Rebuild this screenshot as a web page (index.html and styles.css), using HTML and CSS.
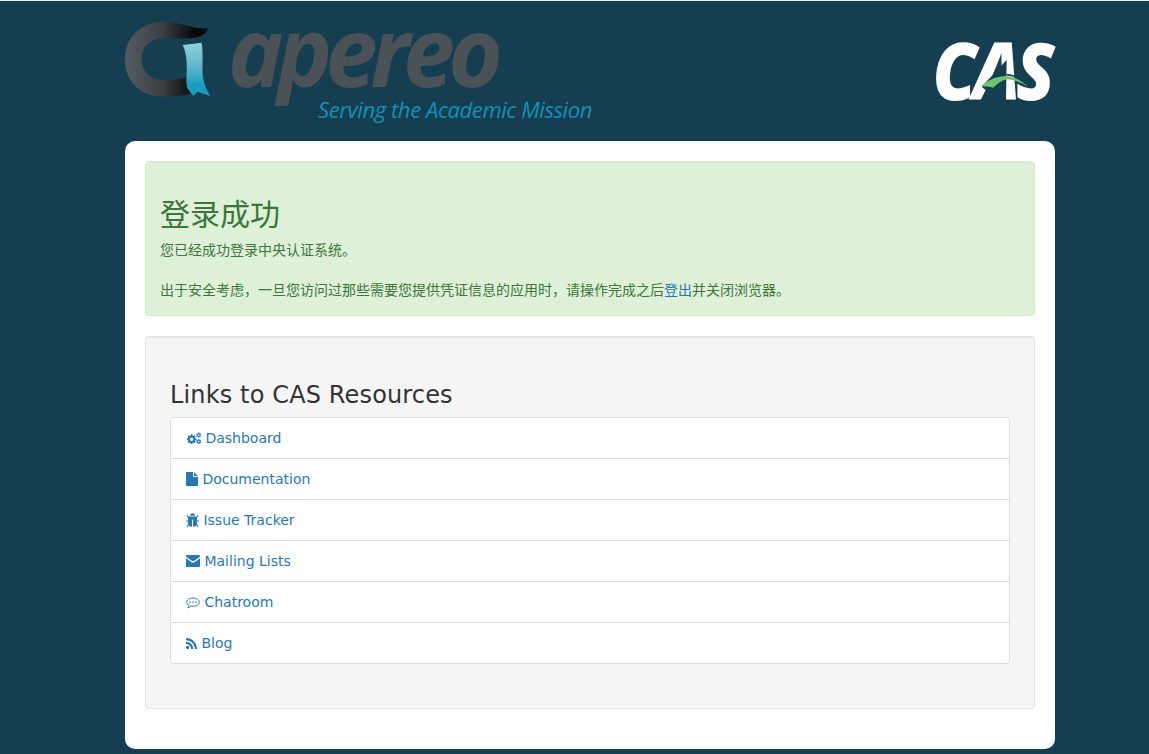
FILE: index.html
```html
<!DOCTYPE html>
<html lang="zh-CN">
<head>
<meta charset="utf-8">
<title>CAS - 登录成功</title>
<link rel="stylesheet" href="styles.css">
</head>
<body>
<div class="container">
  <header class="top">
    <svg class="logo-apereo" width="470" height="120" viewBox="0 0 470 120">
      <defs>
        <linearGradient id="ringgrad" x1="0" x2="1" y1="0" y2="0">
          <stop offset="0" stop-color="#555c61"/>
          <stop offset=".45" stop-color="#3a3f43"/>
          <stop offset=".85" stop-color="#050709"/>
          <stop offset="1" stop-color="#050709"/>
        </linearGradient>
        <linearGradient id="ribbongrad" x1="0" x2="0" y1="0" y2="1">
          <stop offset="0" stop-color="#8fd0da"/>
          <stop offset=".45" stop-color="#62b5cd"/>
          <stop offset=".8" stop-color="#199dc0"/>
          <stop offset="1" stop-color="#1a9cc0"/>
        </linearGradient>
        <clipPath id="wordclip"><rect x="90" y="0" width="300" height="85"/></clipPath>
      </defs>
      <g transform="translate(-15 -21) scale(.33333)">
        <path fill="url(#ringgrad)" d="M295 85C285 108 265 113 240 115C215 117 190 115 165 115C120 115 95 140 95 178C95 215 120 240 165 240C190 240 210 238 230 232L240 282C215 288 190 290 160 290C90 290 45 245 45 178C45 110 95 65 160 65C215 65 245 88 295 85Z"/>
        <path fill="url(#ribbongrad)" d="M218 135L275 128C281 165 275 200 279 232C283 255 290 272 301 288L262 275L250 288L232 265C226 240 232 215 230 190C229 170 226 150 218 135Z"/>
      </g>
      <text class="apereo-word" x="103" y="66" textLength="268" lengthAdjust="spacingAndGlyphs" clip-path="url(#wordclip)">apereo</text>
      <text class="apereo-tag" x="193" y="97" textLength="274" lengthAdjust="spacingAndGlyphs">Serving the Academic Mission</text>
    </svg>
    <svg class="logo-cas" width="118" height="62" viewBox="0 0 118 62">
      <text class="cas-word" x="-4.500" y="59" textLength="118" lengthAdjust="spacingAndGlyphs">CAS</text>
      <g transform="translate(28 -1) scale(.33333)">
        <path fill="#153e50" d="M125 60L123 182H46L62 150L50 140Z"/>
        <path fill="none" stroke="#153e50" stroke-width="5" d="M125 104C150 106 175 122 192 140"/>
        <path fill="#6cc56a" d="M48 140C65 120 100 108 125 108C150 110 175 125 190 142C170 128 150 120 125 118C110 122 95 132 85 143C75 140 60 138 48 140Z"/>
      </g>
    </svg>
  </header>

  <main class="card">
    <div class="alert-success">
      <h2 class="alert-title">登录成功</h2>
      <p class="alert-text">您已经成功登录中央认证系统。</p>
      <br>
      <p class="alert-text">出于安全考虑，一旦您访问过那些需要您提供凭证信息的应用时，请操作完成之后<a href="#">登出</a>并关闭浏览器。</p>
    </div>

    <div class="well">
      <h3 class="well-title">Links to CAS Resources</h3>
      <div class="list-group">
        <a class="list-item" href="#">
          <svg class="icon icon-cogs" viewBox="1 0 29 25"><path d="M10.500 4.500h3l.5 2.300 1.600.7 2-1.300 2.100 2.100-1.300 2 .7 1.600 2.300.5v3l-2.300.5-.7 1.600 1.300 2-2.100 2.100-2-1.300-1.600.7-.5 2.300h-3l-.5-2.300-1.600-.7-2 1.300-2.100-2.100 1.300-2-.7-1.600-2.300-.5v-3l2.300-.5.7-1.600-1.300-2 2.100-2.100 2 1.300 1.600-.7zM12 10.700a3.300 3.300 0 1 0 0 6.600 3.300 3.300 0 0 0 0-6.600z" fill-rule="evenodd"/><path d="M24.500 1h2l.3 1.300 1.300.7 1.200-.5.9 1.600-1 .9v1.500l1 .9-.9 1.600-1.200-.5-1.300.7-.3 1.300h-2l-.3-1.300-1.300-.7-1.200.5-.9-1.600 1-.9V5.500l-1-.9.9-1.600 1.200.5 1.300-.7zM25.500 4.500a1.500 1.500 0 1 0 0 3 1.500 1.500 0 0 0 0-3z" fill-rule="evenodd"/><path d="M24.500 13.500h2l.3 1.300 1.300.7 1.200-.5.9 1.600-1 .9v1.500l1 .9-.9 1.600-1.200-.5-1.300.7-.3 1.300h-2l-.3-1.300-1.300-.7-1.200.5-.9-1.600 1-.9V18l-1-.9.9-1.600 1.200.5 1.300-.7zM25.500 17a1.500 1.500 0 1 0 0 3 1.500 1.500 0 0 0 0-3z" fill-rule="evenodd"/></svg>
          Dashboard
        </a>
        <a class="list-item" href="#">
          <svg class="icon icon-file" viewBox="0 0 12 14"><path d="M0 .8C0 .4.3 0 .8 0H7v4.200c0 .5.300.8.800.8H12v8.200c0 .5-.3.800-.8.800H.8c-.5 0-.8-.3-.8-.8zM8 0l4 4H8z"/></svg>
          Documentation
        </a>
        <a class="list-item" href="#">
          <svg class="icon icon-bug" viewBox="0 0 13 14"><path d="M4 2.800C4 1.300 5.100.3 6.500.3S9 1.300 9 2.800z"/><path d="M3 3.600h7c.8.600 1 1.300 1 2.200v4.200C11 12.300 9.500 13.700 7 14V6.500H6V14c-2.500-.3-4-1.700-4-4V5.800c0-.9.200-1.600 1-2.200z"/><path d="M.9 2.500l2 2M12.100 2.500l-2 2M0 8h2.500M13 8h-2.500M.8 13.500l2-2M12.200 13.500l-2-2" stroke="currentColor" stroke-width="1.100" fill="none"/></svg>
          Issue Tracker
        </a>
        <a class="list-item" href="#">
          <svg class="icon icon-envelope" viewBox="0 0 14 12"><path d="M0 3.300V11c0 .6.400 1 1 1h12c.6 0 1-.4 1-1V3.300L8.300 7.300C7.500 7.900 6.500 7.900 5.700 7.300z"/><path d="M1 0C.4 0 0 .4 0 1c0 .5.300 1 .8 1.300l5 3.500c.7.500 1.700.5 2.400 0l5-3.500c.5-.3.800-.8.800-1.300 0-.6-.4-1-1-1z"/></svg>
          Mailing Lists
        </a>
        <a class="list-item" href="#">
          <svg class="icon icon-chat" viewBox="0 0 14 12"><path d="M7 1C3.600 1 .7 2.800.7 5.200c0 1.300.9 2.500 2.300 3.300-.1.900-.6 1.700-1.200 2.300 1.300-.2 2.500-.8 3.400-1.700.6.100 1.200.2 1.800.2 3.400 0 6.300-1.800 6.300-4.100S10.400 1 7 1z" fill="none" stroke="currentColor" stroke-width="1"/><circle cx="4" cy="5.200" r=".8"/><circle cx="7" cy="5.200" r=".8"/><circle cx="10" cy="5.200" r=".8"/></svg>
          Chatroom
        </a>
        <a class="list-item" href="#">
          <svg class="icon icon-rss" viewBox="0 0 11 11"><circle cx="1.600" cy="9.400" r="1.600"/><path d="M0 3.700v2.200c2.800 0 5.100 2.300 5.100 5.100h2.200C7.300 7 4 3.700 0 3.700z"/><path d="M0 0v2.200c4.900 0 8.800 3.900 8.800 8.800H11C11 4.900 6.100 0 0 0z"/></svg>
          Blog
        </a>
      </div>
    </div>
  </main>
</div>
</body>
</html>
```

FILE: styles.css
```css
html, body {
   margin: 0;
   padding: 0;
}

body {
   background-color: #153e50;
   border-top: 1px solid #e8eef0;
   font-family: "DejaVu Sans", "Noto Sans CJK SC", sans-serif;
   font-size: 14px;
   line-height: 20px;
   color: #333;
}

.container {
   width: 930px;
   margin: 0 0 5px 125px;
}

.top {
   display: flex;
   justify-content: space-between;
   align-items: flex-start;
   height: 120px;
   padding-top: 20px;
}

.logo-apereo {
   display: block;
   overflow: visible;
}

.logo-cas {
   display: block;
   margin-top: 20px;
   overflow: visible;
}

.apereo-word {
   font-family: "Open Sans", sans-serif;
   font-style: italic;
   font-weight: 700;
   font-size: 96px;
   letter-spacing: -7px;
   fill: #4b5257;
}

.apereo-tag {
   font-family: "Open Sans", sans-serif;
   font-style: italic;
   font-size: 21px;
   letter-spacing: -.4px;
   fill: #1490b8;
}

.cas-word {
   font-family: "Open Sans", sans-serif;
   font-style: italic;
   font-weight: 800;
   font-size: 80px;
   letter-spacing: -5px;
   fill: #fff;
}

.card {
   background-color: #fff;
   border-radius: 10px;
   padding: 20px;
}

.alert-success {
   background-color: #dff0d8;
   border: 1px solid #d6e9c6;
   border-radius: 4px;
   padding: 15px;
   margin-bottom: 20px;
   color: #3c763d;
}

.alert-title {
   font-size: 30px;
   font-weight: 400;
   line-height: 33px;
   margin: 21px 0 9px -1px;
}

.alert-text {
   margin: 0 0 0 -1px;
}

.alert-text a {
   color: #2a76b5;
   text-decoration: none;
}

.well {
   background-color: #f5f5f5;
   border: 1px solid #e3e3e3;
   border-radius: 4px;
   padding: 24px;
   margin-bottom: 20px;
   box-shadow: inset 0 1px 1px rgba(0, 0, 0, .05);
}

.well-title {
   font-size: 24px;
   font-weight: 400;
   line-height: 26.4px;
   letter-spacing: .14px;
   margin: 21px 0 9px 0;
}

.list-group {
   margin-bottom: 20px;
}

.list-item {
   display: block;
   background-color: #fff;
   border: 1px solid #ddd;
   margin-bottom: -1px;
   padding: 10px 15px;
   color: #2a78b3;
   text-decoration: none;
}

.list-item:first-child {
   border-radius: 4px 4px 0 0;
}

.list-item:last-child {
   border-radius: 0 0 4px 4px;
   margin-bottom: 0;
}

.icon {
   display: inline-block;
   fill: currentColor;
   vertical-align: -2px;
}

.icon-cogs {
   width: 15px;
   height: 13px;
}

.icon-file {
   width: 12px;
   height: 14px;
}

.icon-bug {
   width: 13px;
   height: 14px;
}

.icon-envelope {
   width: 14px;
   height: 12px;
   vertical-align: -1px;
}

.icon-chat {
   width: 14px;
   height: 12px;
}

.icon-rss {
   width: 11px;
   height: 11px;
   vertical-align: -1px;
}
```
